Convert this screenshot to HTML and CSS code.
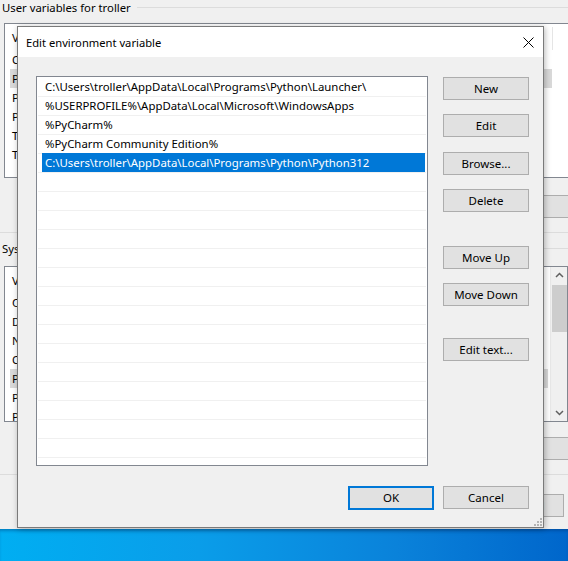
FILE: index.html
```html
<!DOCTYPE html>
<html>
<head>
<meta charset="utf-8">
<link rel="stylesheet" href="styles.css">
</head>
<body>
<div class="win">
  <div class="grp"><span>User variables for troller</span></div>
  <div class="lv lv-user">
    <div class="lv-head"><span class="c1">Variable</span><span class="c2">Value</span></div>
    <div class="lv-row"><span class="c1">OneDrive</span><span class="c2">C:\Users\troller\OneDrive</span></div>
    <div class="lv-row hl"><span class="c1">Path</span><span class="c2">C:\Users\troller\AppData\Local\Programs\Python\Launcher\;%USERPROFILE%\...</span></div>
    <div class="lv-row"><span class="c1">PyCharm</span><span class="c2">C:\Program Files\JetBrains\PyCharm\bin;</span></div>
    <div class="lv-row"><span class="c1">PyCharm Community Edition</span><span class="c2">C:\Program Files\JetBrains\PyCharm Community Edition\bin;</span></div>
    <div class="lv-row"><span class="c1">TEMP</span><span class="c2">%USERPROFILE%\AppData\Local\Temp</span></div>
    <div class="lv-row"><span class="c1">TMP</span><span class="c2">%USERPROFILE%\AppData\Local\Temp</span></div>
  </div>
  <div class="btns btns-user"><button class="wbtn">New...</button><button class="wbtn">Edit...</button><button class="wbtn">Delete</button></div>
  <div class="sep"></div>
  <div class="grp grp-sys"><span>System variables</span></div>
  <div class="lv lv-sys">
    <div class="lv-main">
      <div class="lv-head"><span class="c1">Variable</span><span class="c2">Value</span></div>
      <div class="lv-row"><span class="c1">ComSpec</span><span class="c2">C:\Windows\system32\cmd.exe</span></div>
      <div class="lv-row"><span class="c1">DriverData</span><span class="c2">C:\Windows\System32\Drivers\DriverData</span></div>
      <div class="lv-row"><span class="c1">NUMBER_OF_PROCESSORS</span><span class="c2">8</span></div>
      <div class="lv-row"><span class="c1">OS</span><span class="c2">Windows_NT</span></div>
      <div class="lv-row hl"><span class="c1">Path</span><span class="c2">C:\Windows\system32;C:\Windows;</span></div>
      <div class="lv-row"><span class="c1">PATHEXT</span><span class="c2">.COM;.EXE;.BAT;.CMD;.VBS;.VBE;.JS</span></div>
      <div class="lv-row"><span class="c1">PROCESSOR_ARCHITECTURE</span><span class="c2">AMD64</span></div>
    </div>
    <div class="vscroll">
      <svg class="arr" width="17" height="17" viewBox="0 0 17 17"><path d="M5 10 L8.5 6.5 L12 10" fill="none" stroke="#606060" stroke-width="1.5"/></svg>
      <div class="track"><div class="thumb"></div></div>
      <svg class="arr" width="17" height="17" viewBox="0 0 17 17"><path d="M5 7 L8.5 10.5 L12 7" fill="none" stroke="#606060" stroke-width="1.5"/></svg>
    </div>
  </div>
  <div class="btns btns-sys"><button class="wbtn">New...</button><button class="wbtn">Edit...</button><button class="wbtn">Delete</button></div>
  <div class="sep sep2"></div>
  <div class="btns btns-foot"><button class="wbtn">OK</button><button class="wbtn">Cancel</button></div>
</div>
<div class="taskbar"></div>

<div class="dialog">
  <div class="titlebar">
    <span class="title">Edit environment variable</span>
    <svg class="close" width="11" height="11" viewBox="0 0 11 11"><path d="M0.5 0.5 L10.5 10.5 M10.5 0.5 L0.5 10.5" stroke="#000" stroke-width="1"/></svg>
  </div>
  <div class="body">
    <div class="list">
      <div class="row first"><span class="txt">C:\Users\troller\AppData\Local\Programs\Python\Launcher\</span></div>
      <div class="row"><span class="txt">%USERPROFILE%\AppData\Local\Microsoft\WindowsApps</span></div>
      <div class="row"><span class="txt">%PyCharm%</span></div>
      <div class="row"><span class="txt">%PyCharm Community Edition%</span></div>
      <div class="row sel"><span class="txt">C:\Users\troller\AppData\Local\Programs\Python\Python312</span></div>
      <div class="row"><span class="txt"></span></div>
      <div class="row"><span class="txt"></span></div>
      <div class="row"><span class="txt"></span></div>
      <div class="row"><span class="txt"></span></div>
      <div class="row"><span class="txt"></span></div>
      <div class="row"><span class="txt"></span></div>
      <div class="row"><span class="txt"></span></div>
      <div class="row"><span class="txt"></span></div>
      <div class="row"><span class="txt"></span></div>
      <div class="row"><span class="txt"></span></div>
      <div class="row"><span class="txt"></span></div>
      <div class="row"><span class="txt"></span></div>
      <div class="row"><span class="txt"></span></div>
      <div class="row"><span class="txt"></span></div>
      <div class="row"><span class="txt"></span></div>
      <div class="row"><span class="txt"></span></div>
    </div>
    <div class="side">
      <button class="btn">New</button>
      <button class="btn">Edit</button>
      <button class="btn b-browse">Browse...</button>
      <button class="btn">Delete</button>
      <button class="btn b-up">Move Up</button>
      <button class="btn">Move Down</button>
      <button class="btn b-text">Edit text...</button>
    </div>
  </div>
  <div class="footer">
    <button class="btn ok">OK</button>
    <button class="btn">Cancel</button>
  </div>
  <svg class="grip" width="9" height="9" viewBox="0 0 9 9" fill="#b4b4b4">
    <rect x="7" y="1" width="2" height="2"/>
    <rect x="4" y="4" width="2" height="2"/><rect x="7" y="4" width="2" height="2"/>
    <rect x="1" y="7" width="2" height="2"/><rect x="4" y="7" width="2" height="2"/><rect x="7" y="7" width="2" height="2"/>
  </svg>
</div>
</body>
</html>
```
FILE: styles.css
```css
* { box-sizing: border-box; }
html, body { margin: 0; padding: 0; }
body {
  width: 568px;
  height: 561px;
  overflow: hidden;
  position: relative;
  background: #f0f0f0;
  font-family: "Noto Sans", "Open Sans", sans-serif;
  font-size: 11.5px;
  color: #000;
}
button { font: inherit; color: inherit; margin: 0; padding: 0; }

/* background window */
.win {
  height: 529px;
  width: 640px;
  display: flex;
  flex-direction: column;
  overflow: hidden;
}
.grp {
  height: 15px;
  display: flex;
  align-items: center;
  padding-left: 2px;
  white-space: nowrap;
  line-height: 15px;
  font-size: 11.3px;
}
.grp::after {
  content: "";
  flex: 1;
  border-top: 1px solid #dcdcdc;
  margin-left: 6px;
}
.lv {
  margin-left: 4px;
  width: 620px;
  background: #fff;
  border: 1px solid #828790;
  overflow: hidden;
}
.lv-user { margin-top: 8px; height: 155px; padding-left: 5px; }
.lv-head { height: 26px; display: flex; align-items: center; }
.lv-head .c2 { height: 23px; margin-top: 3px; border-right: 1px solid #e5e5e5; }
.lv-row { height: 19px; display: flex; align-items: center; width: 542px; white-space: nowrap; }
.lv-row.hl { background: #d9d9d9; }
.c1 { width: 150px; padding-left: 2px; overflow: hidden; white-space: nowrap; flex: none; }
.c2 { width: 380px; overflow: hidden; white-space: nowrap; flex: none; display: flex; align-items: center; }
.lv-user .lv-head { width: 543px; }
.lv-user .lv-head .c2 { width: 393px; }

.btns { display: flex; justify-content: flex-end; gap: 8px; width: 640px; }
.wbtn {
  width: 75px;
  height: 23px;
  background: #e1e1e1;
  border: 1px solid #adadad;
  white-space: nowrap;
  flex: none;
}
.btns-user, .btns-sys { padding-right: 2px; }
.btns-user .wbtn, .btns-sys .wbtn { width: 104px; }
.btns-user { margin-top: 17px; }
.sep { margin-top: 14px; height: 1px; background: #dcdcdc; width: 640px; }
.grp-sys { margin-top: 8px; }
.lv-sys { margin-top: 10px; height: 156px; display: flex; padding-left: 5px; width: 564px; }
.lv-main { flex: 1; overflow: hidden; }
.lv-sys .lv-row { width: 538px; }
.vscroll {
  width: 17px;
  flex: none;
  display: flex;
  flex-direction: column;
  background: #f0f0f0;
  border-left: 1px solid #e8e8e8;
}
.track { flex: 1; padding: 1px 0 0 1px; }
.thumb { height: 47px; background: #cdcdcd; }
.btns-sys { margin-top: 15px; }
.sep2 { margin-top: 14px; }
.btns-foot { margin-top: 19px; width: 568px; padding-right: 4px; }

.taskbar {
  height: 32px;
  background: linear-gradient(to right, #00aef2 0%, #0a9de9 35%, #0a82da 70%, #0066cb 100%);
  box-shadow: inset 0 3px 3px -1px rgba(0, 40, 100, 0.35);
}

/* dialog */
.dialog {
  position: absolute;
  left: 17px;
  top: 26px;
  width: 527px;
  height: 502px;
  background: #f0f0f0;
  border: 1px solid #7a7a7a;
  box-shadow: 1px 1px 6px rgba(0, 0, 0, 0.28);
  display: flex;
  flex-direction: column;
}
.titlebar {
  height: 30px;
  background: #fff;
  display: flex;
  align-items: center;
  padding: 0 9px 0 8px;
  flex: none;
}
.title { flex: 1; font-size: 11.2px; padding-top: 1px; }
.close { display: block; }
.body {
  display: flex;
  gap: 15px;
  padding: 19px 13px 0 18px;
}
.list {
  width: 392px;
  height: 390px;
  background: #fff;
  border: 1px solid #828790;
  padding: 0 1px;
  overflow: hidden;
  flex: none;
  font-size: 11.4px;
}
.row {
  height: 19px;
  border-top: 1px solid #f0f0f0;
  display: flex;
}
.row.first { border-top-color: transparent; }
.txt {
  flex: 1;
  margin: 0 1px 0 4px;
  padding-left: 3px;
  line-height: 18px;
  white-space: nowrap;
  overflow: hidden;
}
.row.sel .txt {
  background: #0078d7;
  color: #fff;
  margin-top: -1px;
  height: 19px;
  line-height: 19px;
}
.side {
  width: 86px;
  display: flex;
  flex-direction: column;
  gap: 14px;
  padding-top: 1px;
}
.btn {
  height: 23px;
  width: 86px;
  background: #e1e1e1;
  border: 1px solid #adadad;
  white-space: nowrap;
  flex: none;
}
.b-browse { margin-top: 1px; }
.b-up { margin-top: 20px; }
.b-text { margin-top: 18px; }
.footer {
  display: flex;
  justify-content: flex-end;
  align-items: center;
  gap: 9px;
  padding: 0 14px 0 0;
  margin-top: 20px;
  height: 24px;
}
.footer .btn { margin-top: -1px; }
.btn.ok { border: 2px solid #0078d7; height: 24px; width: 86px; margin-top: -1px; }
.grip { position: absolute; right: 1px; bottom: 1px; }
```
